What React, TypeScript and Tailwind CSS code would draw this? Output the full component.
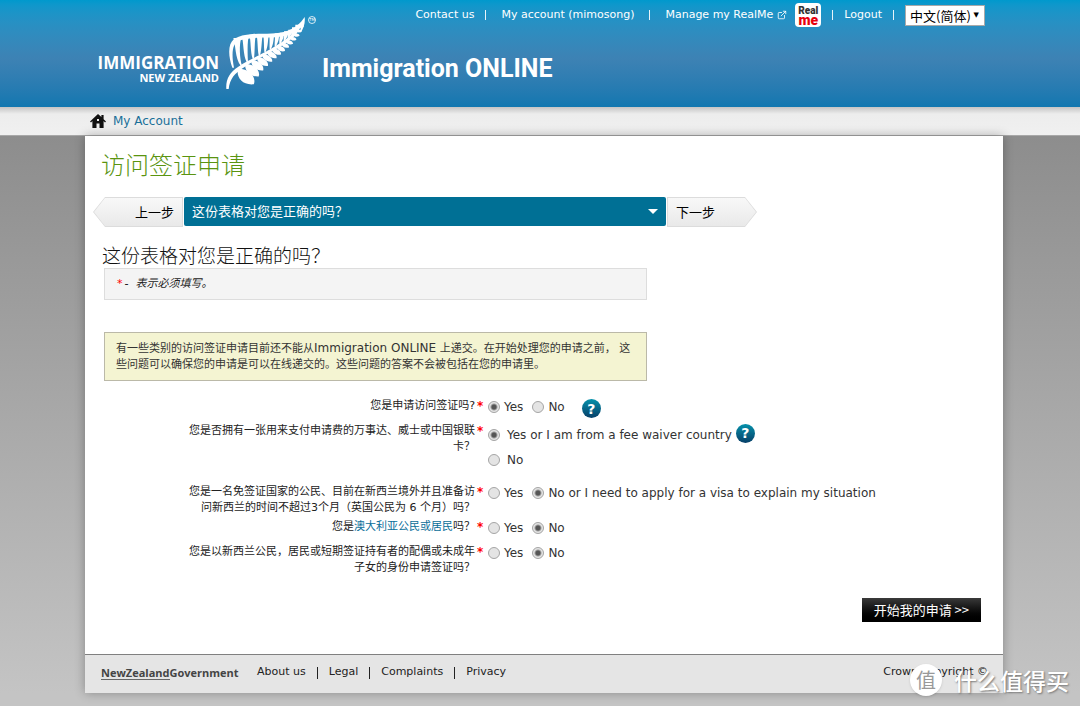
import { useState } from "react";
import type { ReactNode } from "react";
import { ExternalLink } from "lucide-react";

interface Option {
  value: string;
  label: string;
}

interface Question {
  id: string;
  text: ReactNode;
  options: Option[];
  initial: string;
  stacked?: boolean;
  help?: boolean;
  rowClass: string;
}

const questions: Question[] = [
  {
    id: "visitor",
    text: "您是申请访问签证吗?",
    options: [
      { value: "yes", label: "Yes" },
      { value: "no", label: "No" },
    ],
    initial: "yes",
    help: true,
    rowClass: "min-h-[25px]",
  },
  {
    id: "payment",
    text: "您是否拥有一张用来支付申请费的万事达、威士或中国银联卡？",
    options: [
      { value: "yes", label: "Yes or I am from a fee waiver country" },
      { value: "no", label: "No" },
    ],
    initial: "yes",
    stacked: true,
    help: true,
    rowClass: "min-h-[61px]",
  },
  {
    id: "waiver",
    text: "您是一名免签证国家的公民、目前在新西兰境外并且准备访问新西兰的时间不超过3个月（英国公民为 6 个月）吗？",
    options: [
      { value: "yes", label: "Yes" },
      { value: "no", label: "No or I need to apply for a visa to explain my situation" },
    ],
    initial: "no",
    rowClass: "min-h-[35px]",
  },
  {
    id: "australian",
    text: (
      <>
        您是
        <a href="#australia" className="text-[#0a6e99]">
          澳大利亚公民或居民
        </a>
        吗？
      </>
    ),
    options: [
      { value: "yes", label: "Yes" },
      { value: "no", label: "No" },
    ],
    initial: "no",
    rowClass: "min-h-[25px]",
  },
  {
    id: "partner",
    text: "您是以新西兰公民，居民或短期签证持有者的配偶或未成年子女的身份申请签证吗？",
    options: [
      { value: "yes", label: "Yes" },
      { value: "no", label: "No" },
    ],
    initial: "no",
    rowClass: "min-h-[32px]",
  },
];

// x, y on the stem, length, width and angle of each lower frond
const fronds = [
  [470, 205, 66, 34, 36],
  [492, 190, 55, 25, 36],
  [510, 179, 47, 21, 34],
  [527, 170, 42, 18, 32],
  [542, 161, 38, 16, 30],
  [557, 153, 35, 15, 28],
  [572, 145, 32, 14, 26],
  [586, 137, 29, 13, 24],
  [600, 129, 26, 12, 20],
  [613, 121, 24, 11, 15],
  [625, 112, 21, 10, 8],
  [636, 103, 19, 9, 0],
  [646, 92, 16, 8, -8],
  [654, 80, 14, 7, -20],
];

// top x, top y, bottom x, bottom y, half width at the top
const teeth = [
  [468, 116, 480, 196, 12],
  [492, 109, 498, 185, 11],
  [514, 106, 516, 175, 10],
  [535, 105, 534, 165, 10],
  [554, 105, 551, 155, 9],
  [571, 104, 567, 146, 8],
  [587, 102, 582, 138, 7],
  [601, 100, 596, 130, 6],
  [614, 96, 609, 122, 6],
  [626, 91, 621, 114, 5],
  [637, 84, 632, 106, 5],
  [647, 76, 642, 96, 5],
];

function Fern() {
  return (
    <svg width="81" height="74" viewBox="431 47 243 222" fill="white" aria-hidden="true">
      <path d="M435 266c-2-28 9-50 36-67 36-23 84-43 120-67 30-19 49-34 60-59l8 3c-10 27-31 44-60 62-38 24-78 40-114 65-25 17-39 31-43 63z" />
      <path d="M453 202c-10-28-12-53-6-70 9-23 36-28 66-31 38-3 74 2 106-10 25-9 38-22 51-41 2 16-2 35-14 48 0 0 3-14 1-17-13 14-30 22-51 27-32 6-66 2-96 6-27 3-45 7-51 21-7 13-7 37-1 67z" />
      {teeth.map(([tx, ty, bx, by, w]) => (
        <path
          key={tx}
          d={`M${tx - w} ${ty - 3}C${tx - 5} ${ty + 14} ${tx - 7} ${by - 20} ${bx - 2} ${by}L${bx + 2} ${by}C${tx + 7} ${by - 20} ${tx + 5} ${ty + 14} ${tx + w} ${ty - 3}z`}
        />
      ))}
      {fronds.map(([x, y, len, w, angle]) => (
        <path
          key={x}
          transform={`translate(${x} ${y}) rotate(${angle})`}
          d={`M0 0C${len * 0.4} ${-w * 0.6} ${len * 0.9} ${-w * 0.4} ${len} ${w * 0.3}C${len * 0.6} ${w} ${len * 0.15} ${w * 0.7} 0 0z`}
        />
      ))}
    </svg>
  );
}

function HomeIcon() {
  return (
    <svg width="16" height="14" viewBox="0 0 16 14" fill="#111" aria-hidden="true">
      <path d="M8 0L0 7.4l1 1 1.400-1.300V14H6.500V9.500h3V14h4.100V7.100L15 8.400l1-1-2.400-2.200V1h-2.200v2.100z" />
      <path d="M7 5h2v2H7z" fill="#eee" />
    </svg>
  );
}

function Separator() {
  return <span aria-hidden="true" className="h-2.5 w-px bg-white/90" />;
}

function Header() {
  return (
    <header className="grid h-[107px] bg-linear-to-b from-[#0099cd] via-[#3d82b4] via-55% to-[#1077b0] text-white">
      <div className="col-start-1 row-start-1 flex items-start pl-[99px]">
        <div className="mt-[54px] flex w-[120px] flex-col items-end font-['Open_Sans'] font-bold">
          <p className="text-[17px] leading-[17px]">IMMIGRATION</p>
          <p className="text-[11px] leading-[13px]">NEW ZEALAND</p>
        </div>
        <div className="ml-1.5 mt-4">
          <Fern />
        </div>
        <span className="ml-0.5 mt-4 flex size-2 items-center justify-center rounded-full border border-white/80 text-[4px] leading-none">
          TM
        </span>
        <h1 className="ml-1.5 mt-12 whitespace-nowrap font-['Roboto'] text-[25px] font-bold leading-[42px]">
          Immigration ONLINE
        </h1>
      </div>
      <nav className="z-10 col-start-1 row-start-1 flex h-[30px] items-center justify-end gap-[11px] self-start justify-self-end whitespace-nowrap pr-[95px] text-[11px]">
        <a href="#contact">Contact us</a>
        <Separator />
        <a href="#account" className="mx-1">
          My account (mimosong)
        </a>
        <Separator />
        <a href="#realme" className="ml-1 flex items-center gap-1">
          Manage my RealMe
          <ExternalLink size={10} strokeWidth={2} />
          <span className="ml-1 flex h-6 w-[26px] flex-col items-center justify-center rounded-sm bg-white font-['Roboto'] font-black">
            <span className="text-[10px] leading-[9px] text-[#333]">Real</span>
            <span className="text-[14px] leading-[10px] text-[#e8000d]">me</span>
          </span>
        </a>
        <Separator />
        <a href="#logout">Logout</a>
        <Separator />
        <div className="relative">
          <select
            aria-label="Language"
            className="block h-[21px] w-20 appearance-none border border-[#a9a9a9] bg-white pl-1 font-['Noto_Sans_CJK_SC',sans-serif] text-[13px] leading-[19px] text-black"
          >
            <option>中文(简体)</option>
            <option>English</option>
          </select>
          <span className="pointer-events-none absolute right-1.5 top-1.5 text-[7px] leading-[8px] text-black">▼</span>
        </div>
      </nav>
    </header>
  );
}

function StepNav() {
  return (
    <nav className="mt-[15px] flex h-[30px] max-w-[664px] gap-px font-['Noto_Sans_CJK_SC',sans-serif] text-[13px]">
      <button
        type="button"
        className="w-[90px] bg-[#dcdcdc] p-px [clip-path:polygon(0_50%,12px_0,100%_0,100%_100%,12px_100%)]"
      >
        <span className="flex h-full items-center justify-end bg-linear-to-b from-[#f8f8f8] to-[#e9e9e9] pr-2 [clip-path:polygon(0_50%,11px_0,100%_0,100%_100%,11px_100%)]">
          上一步
        </span>
      </button>
      <div className="relative h-[29px] flex-1">
        <select
          aria-label="步骤"
          className="block h-full w-full appearance-none rounded-xs bg-[#007095] px-2 pb-px text-[13px] text-white"
        >
          <option>这份表格对您是正确的吗？</option>
        </select>
        <svg className="pointer-events-none absolute right-2 top-3" width="10" height="5" viewBox="0 0 10 5" fill="white">
          <path d="M0 0h10L5 5z" />
        </svg>
      </div>
      <button
        type="button"
        className="w-[90px] bg-[#dcdcdc] p-px [clip-path:polygon(0_0,78px_0,100%_50%,78px_100%,0_100%)]"
      >
        <span className="flex h-full items-center bg-linear-to-b from-[#f8f8f8] to-[#e9e9e9] pl-2 [clip-path:polygon(0_0,77px_0,100%_50%,77px_100%,0_100%)]">
          下一步
        </span>
      </button>
    </nav>
  );
}

function HelpButton() {
  return (
    <button
      type="button"
      aria-label="Help"
      className="flex size-[19px] items-center justify-center rounded-full bg-linear-to-b from-[#0592ab] to-[#073f68] text-[14px] font-bold leading-none text-white"
    >
      ?
    </button>
  );
}

function QuestionRow({ question }: { question: Question }) {
  const [value, setValue] = useState(question.initial);
  const { id, text, options, stacked, help, rowClass } = question;

  return (
    <div role="radiogroup" aria-labelledby={`${id}-label`} className={`flex items-start ${rowClass}`}>
      <div
        id={`${id}-label`}
        className="w-[290px] shrink-0 text-right font-['DejaVu_Sans','Noto_Sans_CJK_SC',sans-serif] text-[11px] leading-4 text-[#222]"
      >
        {text}
      </div>
      <span className="w-[13px] shrink-0 pl-0.5 text-xs font-bold leading-4 text-[#f00]">*</span>
      <div className={stacked ? "flex flex-col gap-[9px] pt-1" : "flex gap-[9px] pt-px"}>
        {options.map((option, i) => (
          <div key={option.value} className="flex h-4 items-center">
            <label className={`flex items-center text-xs leading-4 text-[#333] ${stacked ? "gap-[7px]" : "gap-1"}`}>
              <input
                type="radio"
                name={id}
                value={option.value}
                checked={value === option.value}
                onChange={() => setValue(option.value)}
                className="size-3 shrink-0 appearance-none rounded-full border border-[#a5a5a5] bg-[#e4e4e4] bg-origin-border checked:bg-[radial-gradient(circle,#555_2px,#e4e4e4_4px)]"
              />
              {option.label}
            </label>
            {help && stacked && i === 0 && (
              <span className="mb-1 ml-1">
                <HelpButton />
              </span>
            )}
          </div>
        ))}
        {help && !stacked && (
          <span className="ml-2">
            <HelpButton />
          </span>
        )}
      </div>
    </div>
  );
}

const footerLinks = ["About us", "Legal", "Complaints", "Privacy"];

function Footer() {
  return (
    <footer className="flex h-[39px] items-center border-t border-[#808080] bg-[#e5e5e5] pb-[3px] pl-4 pr-[15px] text-[11px] text-[#222]">
      <div className="flex w-[156px] font-['Open_Sans'] text-[11px] font-bold leading-[13px] text-[#444]">
        <span className="border-b border-[#666]">NewZealand</span>
        <span>Government</span>
      </div>
      <ul className="flex items-center">
        {footerLinks.map((link, i) => (
          <li key={link} className="flex items-center">
            {i > 0 && <span className="mx-[11px] h-3 w-px bg-[#222]" />}
            <a href="#footer">{link}</a>
          </li>
        ))}
      </ul>
      <p className="ml-auto">Crown copyright ©</p>
    </footer>
  );
}

function Watermark() {
  return (
    <div className="pointer-events-none absolute bottom-2.5 right-[11px] flex items-center gap-3 font-['Noto_Sans_CJK_SC',sans-serif] text-white">
      <span className="flex size-8 items-center justify-center rounded-full bg-white text-[20px] leading-none text-[#999] shadow">
        值
      </span>
      <span className="text-[23px] font-medium leading-8 [text-shadow:1px_1px_2px_#777]">什么值得买</span>
    </div>
  );
}

export default function App() {
  return (
    <div
      lang="zh-CN"
      className="relative flex min-h-screen flex-col bg-[#c4c4c4] font-['DejaVu_Sans','Noto_Sans_CJK_SC',sans-serif]"
    >
      <Header />
      <div className="flex h-[29px] items-center gap-[7px] border-b border-[#a8a8a8] bg-linear-to-b from-[#c4c4c4] via-[#ededed] via-25% to-[#f0f0f0] pl-[90px] text-xs">
        <HomeIcon />
        <a href="#account" className="text-[#1a7099]">
          My Account
        </a>
      </div>

      <div className="bg-linear-to-b from-[#8d8d8d] to-[#c4c4c4] pl-[85px] pr-[77px]">
        <div className="shadow-[0_0_10px_rgba(0,0,0,0.3)]">
          <main className="bg-white pb-8">
            <h2 className="pl-4 pt-2.5 font-['Noto_Sans_CJK_SC',sans-serif] text-[24px] font-light leading-9 text-[#5a9410]">
              访问签证申请
            </h2>
            <div className="pl-2">
              <StepNav />
            </div>
            <form className="pl-[17px] pr-[22px]" onSubmit={(e) => e.preventDefault()}>
              <h3 className="pb-px pt-4 font-['Noto_Sans_CJK_SC',sans-serif] text-[19px] font-light leading-6 text-[#111]">
                这份表格对您是正确的吗？
              </h3>
              <div className="ml-0.5 max-w-[543px]">
                <p className="border border-[#ddd] bg-[#f4f4f4] px-3 py-[7px] text-[11px] italic leading-4 text-[#222]">
                  <span className="mr-0.5 text-[#f00]">*</span>-&nbsp; 表示必须填写。
                </p>
                <p className="mt-8 border border-[#bbb9a8] bg-[#f4f4d2] px-[11px] py-[7px] text-[11px] leading-4 text-[#333]">
                  有一些类别的访问签证申请目前还不能从<span className="text-xs leading-4">Immigration ONLINE</span>{" "}
                  上递交。在开始处理您的申请之前， 这
                  <br />
                  些问题可以确保您的申请是可以在线递交的。这些问题的答案不会被包括在您的申请里。
                </p>
              </div>
              <div className="mt-[17px] pl-[83px]">
                {questions.map((question) => (
                  <QuestionRow key={question.id} question={question} />
                ))}
              </div>
              <div className="mt-[22px] flex justify-end">
                <button
                  type="submit"
                  className="h-6 bg-linear-to-b from-[#3a3a3a] to-black px-3 font-['Noto_Sans_CJK_SC',sans-serif] text-[13px] leading-6 text-white"
                >
                  开始我的申请 &gt;&gt;
                </button>
              </div>
            </form>
          </main>
          <Footer />
        </div>
      </div>
      <Watermark />
    </div>
  );
}
